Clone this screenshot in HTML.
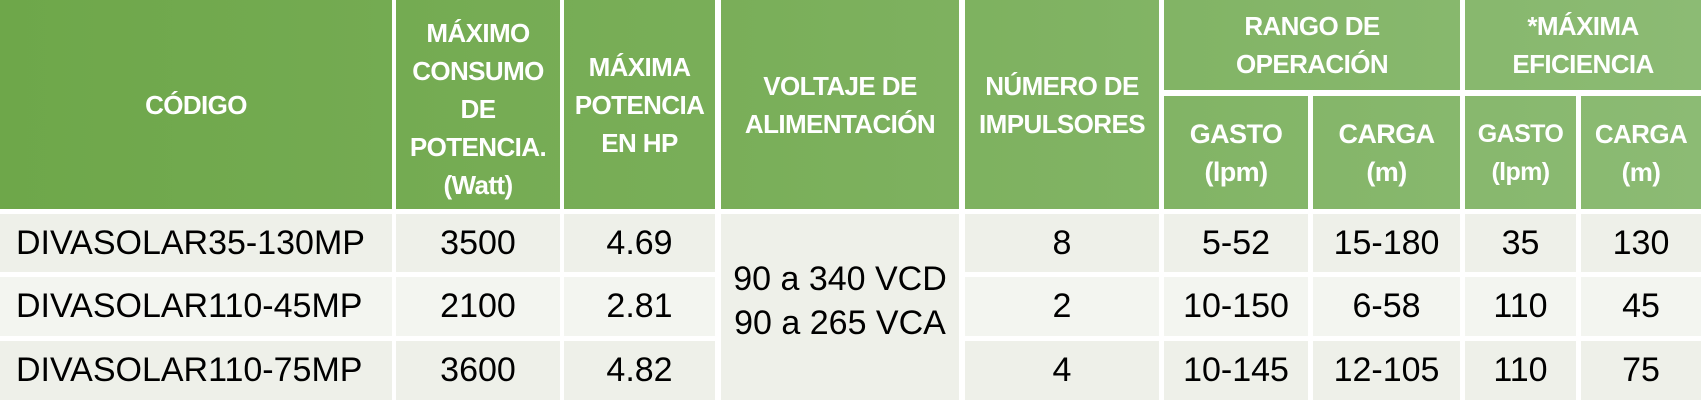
<!DOCTYPE html>
<html><head><meta charset="utf-8"><style>
html,body{margin:0;padding:0;width:1705px;height:400px;background:#fff;overflow:hidden}
.c{position:absolute;display:flex;align-items:center;justify-content:center;text-align:center;font-family:"Liberation Sans",sans-serif;box-sizing:border-box;white-space:nowrap}
.h{background:linear-gradient(90deg,#6ea74a 0px,#79ae58 700px,#8cbb74 1705px);background-attachment:fixed;color:#fff;font-weight:bold;font-size:26px;line-height:38px;letter-spacing:-0.6px}
.b{color:#000;font-size:34px;background:#eef0e9}
.b2{background:#f3f5f0}
</style></head><body>
<div class="c h" style="left:0;top:0;width:392px;height:209px">CÓDIGO</div>
<div class="c h" style="left:396px;top:0;width:164px;height:209px;padding-top:8px">MÁXIMO<br>CONSUMO<br>DE<br>POTENCIA.<br>(Watt)</div>
<div class="c h" style="left:564px;top:0;width:151px;height:209px">MÁXIMA<br>POTENCIA<br>EN HP</div>
<div class="c h" style="left:721px;top:0;width:238px;height:209px">VOLTAJE DE<br>ALIMENTACIÓN</div>
<div class="c h" style="left:965px;top:0;width:194px;height:209px">NÚMERO DE<br>IMPULSORES</div>
<div class="c h" style="left:1164px;top:0;width:296px;height:90px">RANGO DE<br>OPERACIÓN</div>
<div class="c h" style="left:1465px;top:0;width:236px;height:90px">*MÁXIMA<br>EFICIENCIA</div>
<div class="c h" style="left:1164px;top:96px;width:144px;height:113px;font-size:27px">GASTO<br>(lpm)</div>
<div class="c h" style="left:1313px;top:96px;width:147px;height:113px;font-size:27px">CARGA<br>(m)</div>
<div class="c h" style="left:1465px;top:96px;width:111px;height:113px;font-size:25px">GASTO<br>(lpm)</div>
<div class="c h" style="left:1581px;top:96px;width:120px;height:113px;font-size:26px">CARGA<br>(m)</div>

<div class="c b" style="left:0;top:214px;width:392px;height:58px;justify-content:flex-start;padding-left:16px">DIVASOLAR35-130MP</div>
<div class="c b b2" style="left:0;top:277px;width:392px;height:59px;justify-content:flex-start;padding-left:16px">DIVASOLAR110-45MP</div>
<div class="c b" style="left:0;top:341px;width:392px;height:59px;justify-content:flex-start;padding-left:16px">DIVASOLAR110-75MP</div>

<div class="c b" style="left:396px;top:214px;width:164px;height:58px">3500</div>
<div class="c b b2" style="left:396px;top:277px;width:164px;height:59px">2100</div>
<div class="c b" style="left:396px;top:341px;width:164px;height:59px">3600</div>

<div class="c b" style="left:564px;top:214px;width:151px;height:58px">4.69</div>
<div class="c b b2" style="left:564px;top:277px;width:151px;height:59px">2.81</div>
<div class="c b" style="left:564px;top:341px;width:151px;height:59px">4.82</div>

<div class="c b" style="left:721px;top:214px;width:238px;height:186px;line-height:44px;padding-bottom:12px">90 a 340 VCD<br>90 a 265 VCA</div>

<div class="c b" style="left:965px;top:214px;width:194px;height:58px">8</div>
<div class="c b b2" style="left:965px;top:277px;width:194px;height:59px">2</div>
<div class="c b" style="left:965px;top:341px;width:194px;height:59px">4</div>

<div class="c b" style="left:1164px;top:214px;width:144px;height:58px">5-52</div>
<div class="c b b2" style="left:1164px;top:277px;width:144px;height:59px">10-150</div>
<div class="c b" style="left:1164px;top:341px;width:144px;height:59px">10-145</div>

<div class="c b" style="left:1313px;top:214px;width:147px;height:58px">15-180</div>
<div class="c b b2" style="left:1313px;top:277px;width:147px;height:59px">6-58</div>
<div class="c b" style="left:1313px;top:341px;width:147px;height:59px">12-105</div>

<div class="c b" style="left:1465px;top:214px;width:111px;height:58px">35</div>
<div class="c b b2" style="left:1465px;top:277px;width:111px;height:59px">110</div>
<div class="c b" style="left:1465px;top:341px;width:111px;height:59px">110</div>

<div class="c b" style="left:1581px;top:214px;width:120px;height:58px">130</div>
<div class="c b b2" style="left:1581px;top:277px;width:120px;height:59px">45</div>
<div class="c b" style="left:1581px;top:341px;width:120px;height:59px">75</div>
</body></html>
